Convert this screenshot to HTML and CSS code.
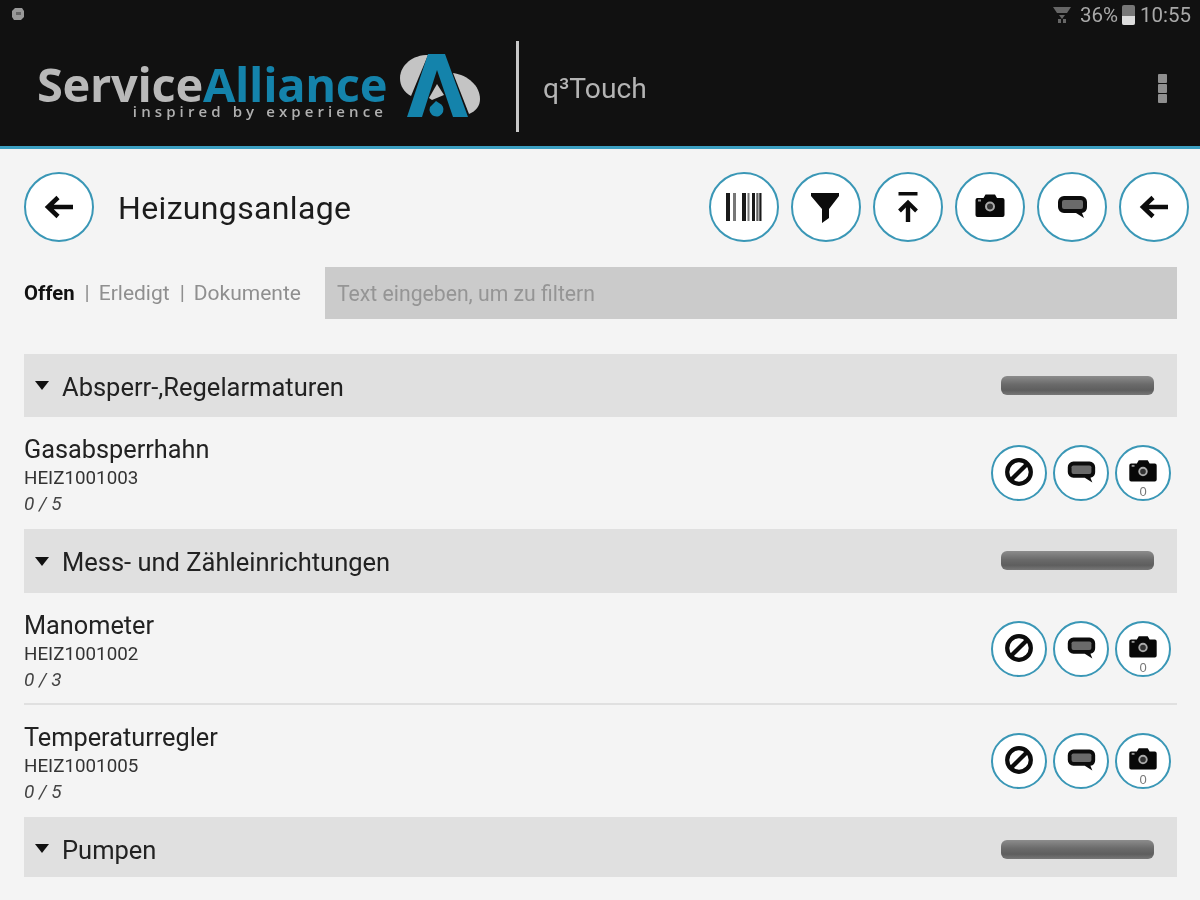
FILE: index.html
```html
<!DOCTYPE html>
<html lang="de">
<head>
<meta charset="utf-8">
<title>q³Touch</title>
<link rel="stylesheet" href="styles.css">
</head>
<body>
<svg class="defs" width="0" height="0" aria-hidden="true">
  <symbol id="i-arrow" viewBox="0 0 36 36">
    <path d="M32 18H8M17 8.500L7 18l10 9.500" fill="none" stroke="#0c0c0c" stroke-width="4.500"/>
  </symbol>
  <symbol id="i-barcode" viewBox="0 0 36 36">
    <path d="M0 4h4v28H0zM16 4h4v28h-4zM26 4h3v28h-3zM30.500 4h5v28h-5z" fill="#1a1a1a"/>
    <path d="M7 4h3v28H7zM21.500 4h2v28h-2z" fill="#777"/>
    <path d="M31.500 4h2v28h-2z" fill="#aaa"/>
  </symbol>
  <symbol id="i-funnel" viewBox="0 0 36 36">
    <path d="M3 4h28v3L21 20v9l-7 5V20L3 7z" fill="#0c0c0c"/>
  </symbol>
  <symbol id="i-upload" viewBox="0 0 36 36">
    <path d="M8.500 3h19v3.500h-19zM15.800 33V15h4.400v18z" fill="#0c0c0c"/>
    <path d="M9.500 22l8.500-8.500 8.500 8.500" fill="none" stroke="#0c0c0c" stroke-width="4"/>
  </symbol>
  <symbol id="i-camera" viewBox="0 0 36 36">
    <path d="M3.500 11a2 2 0 0 1 2-2h6l2-3.500h9.500l2 3.500h5.500a2 2 0 0 1 2 2v15a2 2 0 0 1-2 2h-25a2 2 0 0 1-2-2z" fill="#080808"/>
    <circle cx="18" cy="17.500" r="4" fill="#333" stroke="#aaa" stroke-width="2"/>
    <rect x="6" y="10.500" width="3" height="2" fill="#999"/>
  </symbol>
  <symbol id="i-comment" viewBox="0 0 36 36">
    <path d="M10 7h17a6 6 0 0 1 6 6v5a6 6 0 0 1-5 6l2 5-8-5H10a6 6 0 0 1-6-6v-5a6 6 0 0 1 6-6z" fill="#0c0c0c"/>
    <rect x="8" y="11" width="21" height="9" rx="2" fill="#6a6a6a"/>
  </symbol>
  <symbol id="i-ban" viewBox="0 0 36 36">
    <circle cx="18" cy="18" r="12.500" fill="none" stroke="#0c0c0c" stroke-width="4.500"/>
    <path d="M10 26 26 10" stroke="#0c0c0c" stroke-width="4.500"/>
  </symbol>
</svg>

<div class="screen">
  <header class="appbar">
    <div class="status">
      <svg class="notif" viewBox="0 0 14 14"><path d="M4 1h7l2 3v6l-3 3H3L1 10V4z" fill="#999"/><path d="M5 5h5v3H5z" fill="#666"/></svg>
      <div class="status-right">
        <svg class="wifi" viewBox="0 0 18 18"><path d="M0 1h18l-4 6H4zM6 9h6l-3 4zM5 13h3v4H5zM10 13h3v4h-3z" fill="#666"/></svg>
        <span class="status-text">36%</span>
        <span class="battery"><span class="battery-fill"></span></span>
        <span class="status-text">10:55</span>
      </div>
    </div>
    <div class="toolbar">
      <div class="wordmark">
        <div class="wordmark-name"><span class="wm-grey">Service</span><span class="wm-blue">Alliance</span></div>
        <div class="wordmark-tag">inspired by experience</div>
      </div>
      <svg class="mark" viewBox="0 0 84 70">
        <path d="M28 5C11 6 2 18 2 28c0 8 4 14 11 18L30 5z" fill="#c4c4c4"/>
        <path d="M55 23c15 2 27 13 27 26 0 7-4 12-11 15L55 23z" fill="#c4c4c4"/>
        <path d="M39 34l7 11-12 5-3-2z" fill="#c4c4c4"/>
        <path d="M30 4h17l23 63H55L39 20 24 67H9z" fill="#1483ab"/>
        <path d="M38 51l3 2a7 7 0 1 1-9 4z" fill="#1483ab"/>
      </svg>
      <div class="vrule"></div>
      <div class="appname">q³Touch</div>
      <div class="overflow"><i></i><i></i><i></i></div>
    </div>
  </header>

  <main class="content">
    <div class="titlebar">
      <button class="round"><svg><use href="#i-arrow"/></svg></button>
      <h1 class="title">Heizungsanlage</h1>
      <div class="actions">
        <button class="round"><svg><use href="#i-barcode"/></svg></button>
        <button class="round"><svg><use href="#i-funnel"/></svg></button>
        <button class="round"><svg><use href="#i-upload"/></svg></button>
        <button class="round"><svg><use href="#i-camera"/></svg></button>
        <button class="round"><svg><use href="#i-comment"/></svg></button>
        <button class="round"><svg><use href="#i-arrow"/></svg></button>
      </div>
    </div>

    <div class="filterbar">
      <nav class="tabs">
        <span class="tab active">Offen</span><span class="sep">|</span><span class="tab">Erledigt</span><span class="sep">|</span><span class="tab">Dokumente</span>
      </nav>
      <div class="filter">Text eingeben, um zu filtern</div>
    </div>

    <section class="group g1">
      <span class="caret"></span><span class="group-name">Absperr-,Regelarmaturen</span><span class="progress"></span>
    </section>
    <article class="row">
      <div class="row-text"><div class="name">Gasabsperrhahn</div><div class="code">HEIZ1001003</div><div class="count">0 / 5</div></div>
      <div class="row-actions">
        <button class="round small"><svg><use href="#i-ban"/></svg></button>
        <button class="round small"><svg><use href="#i-comment"/></svg></button>
        <button class="round small"><svg><use href="#i-camera"/></svg><span class="badge">0</span></button>
      </div>
    </article>

    <section class="group g2">
      <span class="caret"></span><span class="group-name">Mess- und Zähleinrichtungen</span><span class="progress"></span>
    </section>
    <article class="row ruled">
      <div class="row-text"><div class="name">Manometer</div><div class="code">HEIZ1001002</div><div class="count">0 / 3</div></div>
      <div class="row-actions">
        <button class="round small"><svg><use href="#i-ban"/></svg></button>
        <button class="round small"><svg><use href="#i-comment"/></svg></button>
        <button class="round small"><svg><use href="#i-camera"/></svg><span class="badge">0</span></button>
      </div>
    </article>
    <article class="row">
      <div class="row-text"><div class="name">Temperaturregler</div><div class="code">HEIZ1001005</div><div class="count">0 / 5</div></div>
      <div class="row-actions">
        <button class="round small"><svg><use href="#i-ban"/></svg></button>
        <button class="round small"><svg><use href="#i-comment"/></svg></button>
        <button class="round small"><svg><use href="#i-camera"/></svg><span class="badge">0</span></button>
      </div>
    </article>

    <section class="group g3">
      <span class="caret"></span><span class="group-name">Pumpen</span><span class="progress"></span>
    </section>
  </main>
</div>
</body>
</html>
```

FILE: styles.css
```css
* { box-sizing: border-box; }
html, body { margin: 0; padding: 0; }
body {
  width: 1200px;
  height: 900px;
  overflow: hidden;
  background: #f4f4f4;
  font-family: Roboto, "Liberation Sans", sans-serif;
  color: #1c1c1c;
}
.defs { display: block; height: 0; }
.screen { width: 1200px; height: 900px; filter: blur(0.7px); }

/* app bar */
.appbar {
  height: 149px;
  background: #111;
  border-bottom: 3px solid #3b9fc2;
}
.status {
  height: 30px;
  display: flex;
  align-items: center;
  justify-content: space-between;
  padding: 0 9px 0 11px;
}
.notif { width: 14px; height: 14px; margin-top: -2px; }
.status-right { display: flex; align-items: center; }
.wifi { width: 18px; height: 18px; margin-right: 9px; }
.status-text { color: #a8a8a8; font-size: 20.500px; line-height: 30px; }
.battery {
  width: 13px;
  height: 20px;
  margin: 0 5px 0 4px;
  background: #777;
  border-radius: 2px;
  display: flex;
  align-items: flex-end;
}
.battery-fill { width: 100%; height: 9px; background: #ddd; border-radius: 0 0 2px 2px; }

.toolbar {
  height: 116px;
  display: flex;
  align-items: flex-start;
  padding-left: 37px;
  position: relative;
}
.wordmark { width: 350px; margin-top: 35px; flex: none; }
.wordmark-name {
  font-family: "Open Sans", "Liberation Sans", sans-serif;
  font-weight: 700;
  font-size: 47px;
  line-height: 38px;
  letter-spacing: -0.3px;
  white-space: nowrap;
}
.wm-grey { color: #b9b9b9; }
.wm-blue { color: #1483ab; }
.wordmark-tag {
  color: #b0b0b0;
  font-family: "Open Sans", "Liberation Sans", sans-serif;
  font-size: 15px;
  font-weight: 600;
  line-height: 14px;
  letter-spacing: 4.1px;
  text-align: right;
  white-space: nowrap;
  margin-top: 1px;
}
.mark { width: 84px; height: 70px; margin: 20px 0 0 11px; flex: none; }
.vrule { width: 3px; height: 91px; background: #c8c8c8; margin: 11px 0 0 34px; flex: none; }
.appname { color: #b4b4b4; font-size: 28.200px; line-height: 118px; margin: 0 0 0 24px; }
.overflow {
  display: flex;
  flex-direction: column;
  gap: 1px;
  position: absolute;
  left: 1158px;
  top: 44px;
}
.overflow i { display: block; width: 9px; height: 9px; background: #8f8f8f; border-radius: 1px; }

/* content */
.content {
  height: 751px;
  padding: 0 23px 0 24px;
  background-color: #f4f4f4;
}
.round {
  width: 70px;
  height: 70px;
  padding: 0;
  flex: none;
  border: 2px solid #3a97b6;
  border-radius: 50%;
  background: #fff;
  display: flex;
  align-items: center;
  justify-content: center;
  position: relative;
}
.round svg { width: 36px; height: 36px; display: block; }
.round.small { width: 56px; height: 56px; }
.round.small svg { width: 34px; height: 34px; margin-top: -2px; }

.titlebar {
  display: flex;
  align-items: center;
  padding-top: 23px;
  height: 93px;
  margin-right: -12px;
}
.title {
  margin: 3px 0 0 24px;
  font-size: 32px;
  font-weight: 400;
  line-height: 67px;
  letter-spacing: 0.35px;
  flex: 1;
}
.actions { display: flex; gap: 12px; }

.filterbar {
  display: flex;
  align-items: center;
  margin-top: 25px;
  height: 52px;
}
.tabs { width: 301px; font-size: 21px; line-height: 58px; color: #8f8f8f; display: flex; flex: none; white-space: nowrap; }
.tab.active { color: #111; font-weight: 700; font-size: 20.300px; }
.sep { margin: 0 9px 0 10px; color: #8f8f8f; }
.filter {
  flex: 1;
  height: 52px;
  background: #cbcbcb;
  color: #959595;
  font-size: 21.200px;
  line-height: 54px;
  padding-left: 12px;
}

.group {
  display: flex;
  align-items: center;
  background: #e0e0e0;
  padding: 2px 23px 0 11px;
  font-size: 25.500px;
}
.g1 { height: 63px; margin-top: 35px; }
.g2 { height: 64px; }
.g3 { height: 60px; padding-top: 6px; }
.caret {
  width: 0;
  height: 0;
  border-left: 7.500px solid transparent;
  border-right: 7.500px solid transparent;
  border-top: 9px solid #111;
  margin: -2px 13px 0 0;
}
.g3 .caret { margin-top: -4px; }
.group-name { flex: 1; color: #222; }
.progress { width: 153px; height: 19px; margin-top: -3px; border-radius: 6px; background: linear-gradient(#8c8c8c, #6a6a6a 45%, #5e5e5e 75%, #777); }
.g3 .progress { margin-top: -2px; }

.row {
  height: 112px;
  display: flex;
  align-items: center;
  justify-content: space-between;
  padding: 0 6px 0 0;
}
.row.ruled { border-bottom: 2px solid #e0e0e0; padding-top: 2px; }
.row-text { padding-top: 7px; }
.name { font-size: 25.300px; line-height: 28px; color: #222; }
.code { font-size: 18.800px; line-height: 26px; margin-top: 1px; color: #333; }
.count { font-size: 19px; line-height: 26px; font-style: italic; color: #444; }
.row-actions { display: flex; gap: 6px; }
.badge {
  position: absolute;
  left: 0;
  right: 0;
  bottom: 1px;
  text-align: center;
  font-size: 13px;
  line-height: 13px;
  color: #777;
}
```
